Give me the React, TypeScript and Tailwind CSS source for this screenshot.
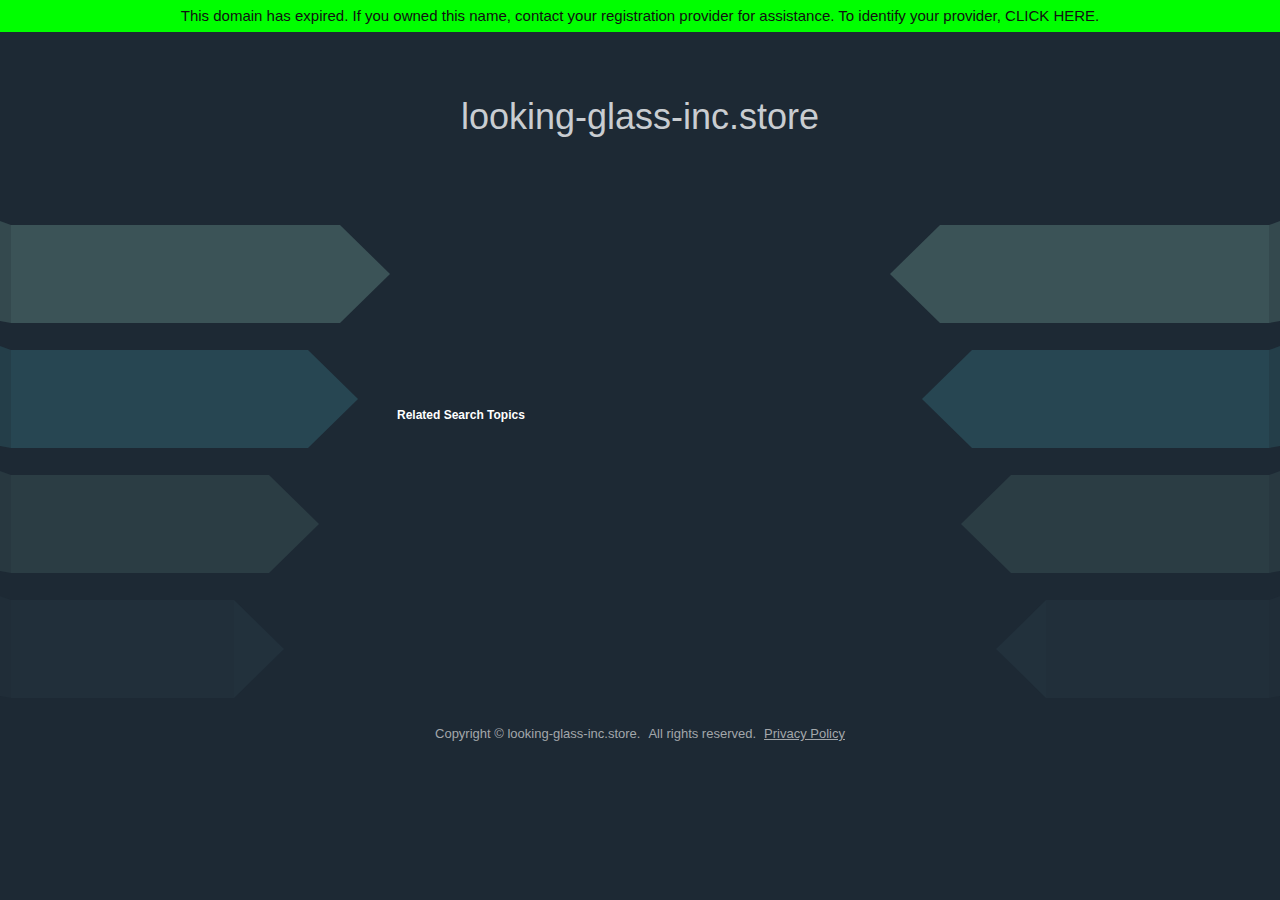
type ArrowProps = {
  width: number;
  body: string;
  edge: string;
  tip: string;
  flip?: boolean;
};

const rows = [
  { width: 390, body: '#3b5357', edge: '#34494e', tip: '#3b5357' },
  { width: 358, body: '#274652', edge: '#243e49', tip: '#274652' },
  { width: 319, body: '#2b3d44', edge: '#283840', tip: '#2b3d44' },
  { width: 284, body: '#212f3a', edge: '#202d38', tip: '#22313c' },
];

function Arrow({ width, body, edge, tip, flip }: ArrowProps) {
  const neck = width - 50;
  return (
    <svg
      width={width}
      height={104}
      viewBox={`0 0 ${width} 104`}
      className={flip ? '-scale-x-100 block' : 'block'}
    >
      <polygon points="0,0 11,4 11,102 0,100" fill={edge} />
      <polygon points={`11,4 ${neck},4 ${neck},102 11,102`} fill={body} />
      <polygon points={`${neck},4 ${width},53 ${neck},102`} fill={tip} />
    </svg>
  );
}

export default function App() {
  return (
    <div className="min-h-[900px] bg-[#1d2934] font-['Liberation_Sans',Arial,sans-serif]">
      <div className="flex h-8 items-center justify-center bg-[#00ff00] text-[15px] text-[#111]">
        This domain has expired. If you owned this name, contact your registration provider for assistance. To identify your provider, CLICK HERE.
      </div>

      <h1 className="mt-[64px] text-center text-[36px] leading-[41px] font-normal text-[#c9cdd1]">
        looking-glass-inc.store
      </h1>

      <div className="mt-[84px] flex">
        <div className="flex w-[390px] flex-col gap-[21px]">
          {rows.map((r) => (
            <Arrow key={r.body} {...r} />
          ))}
        </div>
        <div className="flex-1 pl-[7px] pt-[187px]">
          <p className="text-[12px] leading-[14px] font-bold text-white">Related Search Topics</p>
        </div>
        <div className="flex w-[390px] flex-col items-end gap-[21px]">
          {rows.map((r) => (
            <Arrow key={r.body} {...r} flip />
          ))}
        </div>
      </div>

      <div className="mt-[26px] flex justify-center gap-2 text-[13px] leading-[15px] text-[#a3a7ab]">
        <span>Copyright © looking-glass-inc.store.</span>
        <span>All rights reserved.</span>
        <a href="#" className="underline">Privacy Policy</a>
      </div>
    </div>
  );
}
